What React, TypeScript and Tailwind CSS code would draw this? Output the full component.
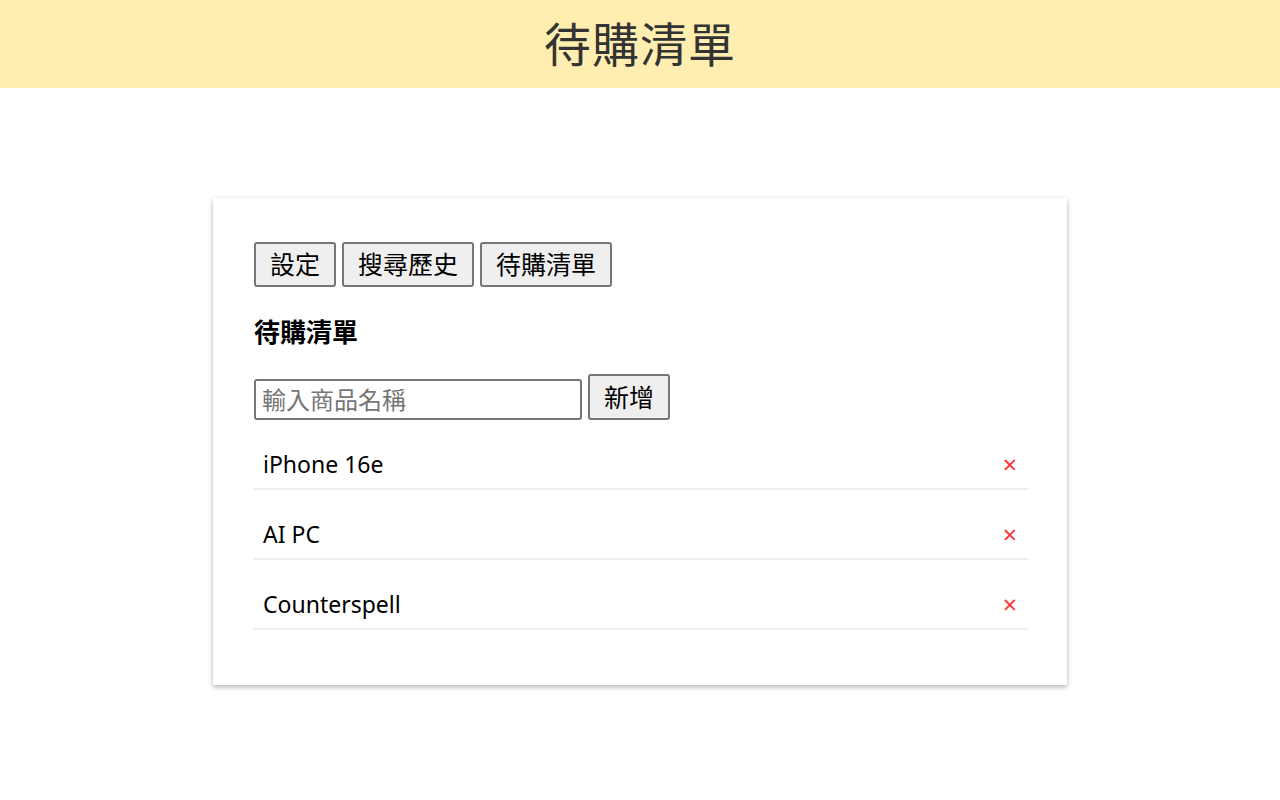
import React, { useState } from 'react';

const font = { fontFamily: '"Noto Sans", "Noto Sans CJK TC", sans-serif' };

const App: React.FC = () => {
  const [items, setItems] = useState<string[]>(['iPhone 16e', 'AI PC', 'Counterspell']);
  const [text, setText] = useState('');

  const addItem = () => {
    if (!text.trim()) return;
    setItems([...items, text.trim()]);
    setText('');
  };

  return (
    <div className="min-h-[800px] bg-white text-black" style={font}>
      <header className="h-[88px] bg-[#ffeeb0] flex items-center justify-center">
        <h1 className="text-[47px] text-[#333] tracking-[1px] leading-none">待購清單</h1>
      </header>

      <main className="flex justify-center pt-[110px]">
        <div className="w-[854px] bg-white shadow-[0_2px_5px_rgba(0,0,0,0.3)] pl-[41px] pr-[39px] pt-[44px] pb-[55px]">
          <div className="flex gap-[6px]">
            {['設定', '搜尋歷史', '待購清單'].map((t) => (
              <button
                key={t}
                className="h-[45px] px-[14px] text-[25px] leading-none bg-[#efefef] border-2 border-[#767676] rounded-[3px] text-black"
              >
                {t}
              </button>
            ))}
          </div>

          <h2 className="mt-[30px] text-[26px] font-bold leading-[30px]">待購清單</h2>

          <div className="mt-[27px] flex items-end gap-[6px]">
            <input
              value={text}
              onChange={(e) => setText(e.target.value)}
              placeholder="輸入商品名稱"
              className="w-[328px] h-[41px] px-[6px] text-[24px] border-2 border-[#767676] rounded-[3px] placeholder:text-[#757575] outline-none"
            />
            <button
              onClick={addItem}
              className="h-[46px] px-[14px] text-[25px] leading-none bg-[#efefef] border-2 border-[#767676] rounded-[3px]"
            >
              新增
            </button>
          </div>

          <ul className="mt-[21px]">
            {items.map((item, i) => (
              <li
                key={i}
                className="h-[49px] mt-[21px] first:mt-0 flex items-center justify-between pl-[9px] pr-[11px] border-b-2 border-[#eeeeee]"
              >
                <span className="text-[23px]">{item}</span>
                <button
                  onClick={() => setItems(items.filter((_, j) => j !== i))}
                  className="text-[#ff3333] text-[25px] leading-none"
                >
                  ×
                </button>
              </li>
            ))}
          </ul>
        </div>
      </main>
    </div>
  );
};

export default App;
